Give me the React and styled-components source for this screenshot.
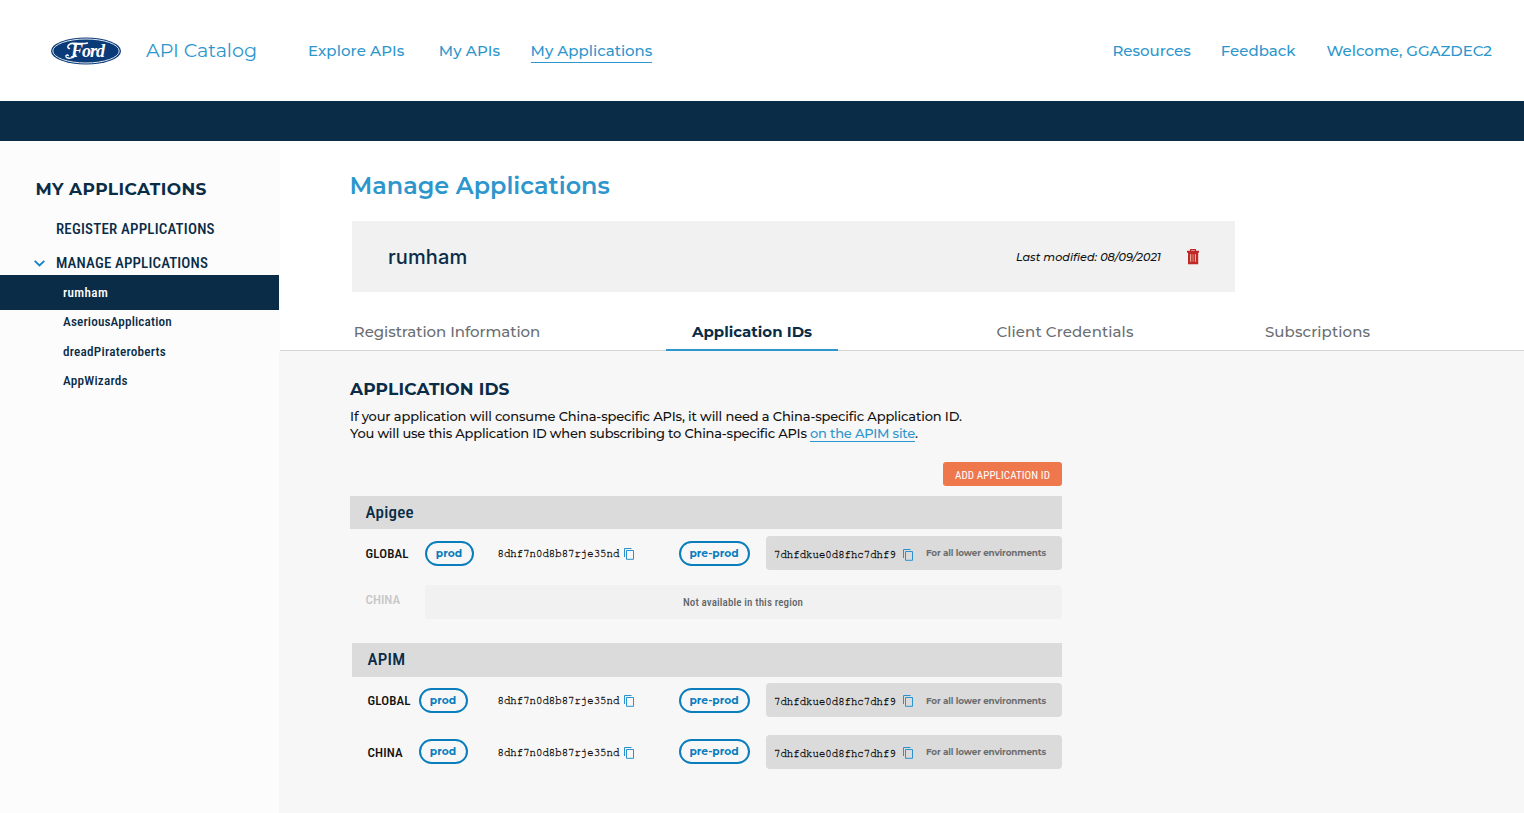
import React from "react";
import styled, { createGlobalStyle, css } from "styled-components";

const NAVY = "#0a2c47";
const SKY = "#2d96cd";
const BLUE = "#0a7dbd";
const WIDE = `Montserrat, Inter, "Liberation Sans", sans-serif`;
const NARROW = `Roboto, "Liberation Sans", sans-serif`;

const GlobalStyle = createGlobalStyle`
  * { box-sizing: border-box; }
  html, body { margin: 0; background: #fff; }
  body { width: 1524px; height: 813px; overflow: hidden; font-family: ${WIDE}; }
  h1, h2, p { margin: 0; }
  a { color: inherit; text-decoration: none; }
`;

const type = css`
  font-size: ${(p) => p.$size}px;
  letter-spacing: ${(p) => p.$track || 0}px;
  white-space: nowrap;
`;
const narrow = css`
  font-family: ${NARROW};
  font-stretch: 75%;
  font-weight: 500;
`;

const Page = styled.div`
  display: flex;
  flex-direction: column;
  height: 813px;
`;
const Header = styled.header`
  display: flex;
  align-items: center;
  height: 101px;
  padding: 0 32px 0 51px;
  color: ${SKY};
`;
const Brand = styled.a`
  ${type}
  width: 134px;
  font-weight: 400;
  margin: 0 0 1px 25px;
`;
const Nav = styled.nav`
  display: flex;
  margin-left: ${(p) => (p.$end ? "auto" : "28px")};
`;
const NavLink = styled.a`
  ${type}
  font-weight: 500;
  line-height: 23px;
  padding-top: 2px;
  margin: 0 0 1px ${(p) => p.$gap || 0}px;
  border-bottom: 1px solid ${(p) => (p.$active ? SKY : "transparent")};
`;
const Band = styled.div`
  height: 40px;
  background: ${NAVY};
`;
const Body = styled.div`
  display: flex;
  flex: 1;
`;
const Sidebar = styled.aside`
  width: 280px;
  padding-top: 36px;
  background: #fcfcfc;
  color: ${NAVY};
`;
const SideTitle = styled.h2`
  ${type}
  font-weight: 700;
  line-height: 24px;
  padding-left: 35.5px;
`;
const SideLink = styled.a`
  ${type}
  ${narrow}
  display: flex;
  align-items: center;
  height: 24px;
  padding-left: ${(p) => (p.$open ? 34 : 56)}px;
  margin-top: ${(p) => p.$top || 0}px;
  svg { margin-right: 11px; }
`;
const SideItem = styled.a`
  ${type}
  ${narrow}
  display: flex;
  align-items: center;
  height: ${(p) => (p.$selected ? 35 : 24)}px;
  margin-bottom: ${(p) => (p.$selected ? -0.5 : 5.5)}px;
  padding-left: 63px;
  width: 279px;
  color: ${(p) => (p.$selected ? "#fff" : NAVY)};
  background: ${(p) => (p.$selected ? NAVY : "transparent")};
`;
const Main = styled.main`
  flex: 1;
  display: flex;
  flex-direction: column;
`;
const PageTitle = styled.h1`
  ${type}
  font-weight: 600;
  color: ${SKY};
  line-height: 30px;
  margin: 30px 0 20px 69.5px;
`;
const AppCard = styled.section`
  display: flex;
  align-items: center;
  width: 883px;
  height: 71px;
  margin-left: 72px;
  padding: 0 36px;
  background: #f1f1f1;
`;
const AppName = styled.span`
  ${type}
  font-family: Inter, sans-serif;
  font-weight: 500;
  color: ${NAVY};
`;
const Modified = styled.span`
  ${type}
  font-style: italic;
  font-weight: 500;
  color: #111;
  margin: 1px 26px 0 auto;
`;
const Tabs = styled.div`
  display: flex;
  height: 59px;
  border-bottom: 1px solid #d4d4d4;
`;
const Tab = styled.a`
  ${type}
  display: flex;
  justify-content: center;
  align-items: flex-start;
  width: ${(p) => p.$width}px;
  margin-left: ${(p) => p.$gap}px;
  height: 59px;
  padding-top: 31px;
  line-height: 18px;
  font-weight: ${(p) => (p.$active ? 700 : 500)};
  color: ${(p) => (p.$active ? NAVY : "#6a6e72")};
  border-bottom: 2px solid ${(p) => (p.$active ? SKY : "transparent")};
`;
const Panel = styled.section`
  flex: 1;
  padding: 27px 0 0 71px;
  background: #f7f7f7;
  margin-left: -1px;
`;
const PanelTitle = styled.h2`
  ${type}
  font-weight: 700;
  line-height: 22px;
  margin-bottom: 7.5px;
  color: ${NAVY};
`;
const Copy = styled.p`
  ${type}
  font-weight: 500;
  line-height: 17.5px;
  color: #111;
`;
const CopyLink = styled.a`
  color: ${SKY};
  display: inline-block;
  line-height: 15px;
  border-bottom: 1px solid ${SKY};
`;
const Ids = styled.div`
  display: flex;
  flex-direction: column;
  width: 712px;
`;
const AddButton = styled.button`
  ${type}
  ${narrow}
  align-self: flex-end;
  width: 119px;
  height: 24px;
  margin: 19.5px 0 10px;
  padding: 2px 0 0;
  border: 0;
  border-radius: 3px;
  font-weight: 400;
  color: #fff;
  background: #ef774c;
`;
const GroupTitle = styled.h2`
  ${type}
  ${narrow}
  height: ${(p) => p.$height}px;
  line-height: 33px;
  margin: ${(p) => p.$top || 0}px 0 ${(p) => p.$after}px ${(p) => p.$inset}px;
  padding-left: 15.5px;
  color: ${NAVY};
  background: #dbdbdb;
`;
const Row = styled.div`
  display: flex;
  align-items: center;
  height: 34px;
  padding-left: ${(p) => p.$inset}px;
  margin-bottom: ${(p) => p.$after || 0}px;
`;
const Region = styled.span`
  ${type}
  ${narrow}
  width: ${(p) => p.$width}px;
  color: ${(p) => (p.$muted ? "#c6c8ca" : "#111")};
  padding-bottom: ${(p) => p.$lift || 0}px;
`;
const Pill = styled.span`
  ${type}
  display: flex;
  justify-content: center;
  align-items: center;
  width: ${(p) => p.$width}px;
  height: 25px;
  padding-top: 1px;
  margin-bottom: ${(p) => p.$lift || 0}px;
  border: 2px solid ${BLUE};
  border-radius: 13px;
  font-weight: 700;
  color: ${BLUE};
`;
const Key = styled.code`
  ${type}
  width: ${(p) => p.$width}px;
  margin-left: ${(p) => p.$gap}px;
  padding-top: ${(p) => p.$drop || 0}px;
  font-family: FreeMono, "Liberation Mono", monospace;
  -webkit-text-stroke: 0.3px #111;
  color: #111;
`;
const KeySlot = styled.span`
  display: flex;
  align-items: center;
  width: ${(p) => p.$width}px;
`;
const LowerBox = styled.div`
  display: flex;
  align-items: center;
  width: 296px;
  height: 34px;
  margin-left: 16px;
  border-radius: 4px;
  background: #dbdbdb;
`;
const Note = styled.span`
  ${type}
  margin-left: 12.5px;
  padding-bottom: ${(p) => p.$lift || 0}px;
  font-weight: 700;
  color: #6b6d70;
`;
const Unavailable = styled.div`
  ${type}
  ${narrow}
  width: 637px;
  height: 34px;
  line-height: 35px;
  border-radius: 4px;
  text-align: center;
  color: #62666a;
  background: #f1f1f1;
`;
const LogoWord = styled.text`
  font: italic 700 18px "Liberation Serif", serif;
  fill: #fff;
`;
const IconSlot = styled.span`
  display: flex;
  margin-top: ${(p) => p.$drop || 0}px;
`;

const FordLogo = () => (
  <svg width="70" height="28" viewBox="0 0 70 28">
    <ellipse cx="35" cy="14" rx="35" ry="13.6" fill="#0b3a78" />
    <ellipse cx="35" cy="14" rx="33.2" ry="12" fill="none" stroke="#dfe7f0" strokeWidth="1" />
    <path d="M18.5 11.5C15.5 11 16.5 6.8 22 6.2C27 5.7 31 7.6 36.5 6" fill="none" stroke="#fff" strokeWidth="1.5" strokeLinecap="round" />
    <path d="M25 18C22 21.5 16.5 22.3 15 19.8C14.3 18.2 16.4 17.4 17.4 18.6" fill="none" stroke="#fff" strokeWidth="1.3" strokeLinecap="round" />
    <LogoWord x="20" y="20" textLength="34">Ford</LogoWord>
  </svg>
);
const Chevron = () => (
  <svg width="11" height="7" viewBox="0 0 11 7" fill="none" stroke="#1583c5" strokeWidth="1.9">
    <path d="M0.7 0.9 5.5 5.4 10.3 0.9" />
  </svg>
);
const Trash = () => (
  <svg width="12" height="16" viewBox="0 0 12 16">
    <path d="M3.6 2V0.7H8.4V2" fill="none" stroke="#bf2a26" strokeWidth="1.2" />
    <path d="M0 1.8H12V3.8H0zM1 3.6H11.2V15.2H1z" fill="#bf2a26" />
    <path d="M3.7 5.2V12.8M8.4 5.2V12.8" stroke="#f0c4b8" strokeWidth="1" />
    <path d="M6 5.2V12.8" stroke="#ec8a6a" strokeWidth="1" />
  </svg>
);
const CopyIcon = () => (
  <svg width="11" height="12" viewBox="0 0 11 12" fill="none" stroke="#2a93cf" strokeWidth="1">
    <path d="M0.5 9V0.5H7.5" />
    <path d="M2.5 2.5H9.5V11.3H2.5z" />
  </svg>
);

const IdRow = ({ region, inset, regionWidth, pillGap, after, noteLift, iconDrop, pillLift }) => (
  <Row $inset={inset} $after={after}>
    <Region $size={13} $track={0.15} $width={regionWidth}>{region}</Region>
    <Pill $size={10.7} $width={49} $lift={pillLift}>prod</Pill>
    <KeySlot $width={pillGap + 181}>
      <Key $size={10.7} $gap={pillGap} $width={126}>8dhf7n0d8b87rje35nd</Key>
      <IconSlot $drop={1}><CopyIcon /></IconSlot>
    </KeySlot>
    <Pill $size={10.7} $width={71} $lift={pillLift}>pre-prod</Pill>
    <LowerBox>
      <Key $size={10.7} $gap={8.5} $width={128.5} $drop={3}>7dhfdkue0d8fhc7dhf9</Key>
      <IconSlot $drop={iconDrop}><CopyIcon /></IconSlot>
      <Note $size={8.8} $track={-0.13} $lift={noteLift}>For all lower environments</Note>
    </LowerBox>
  </Row>
);

export default function App() {
  return (
    <Page>
      <GlobalStyle />
      <Header>
        <FordLogo />
        <Brand $size={19.1} $track={-0.05}>API Catalog</Brand>
        <Nav>
          <NavLink $size={15} $track={0.1}>Explore APIs</NavLink>
          <NavLink $size={15} $track={0.1} $gap={34.5}>My APIs</NavLink>
          <NavLink $size={15} $gap={30.5} $active>My Applications</NavLink>
        </Nav>
        <Nav $end>
          <NavLink $size={15}>Resources</NavLink>
          <NavLink $size={15} $gap={30}>Feedback</NavLink>
          <NavLink $size={15} $gap={31}>Welcome, GGAZDEC2</NavLink>
        </Nav>
      </Header>
      <Band />
      <Body>
        <Sidebar>
          <SideTitle $size={17} $track={0.4}>MY APPLICATIONS</SideTitle>
          <SideLink $size={15} $track={0.2} $top={16}>REGISTER APPLICATIONS</SideLink>
          <SideLink $size={15} $track={0.14} $top={10} $open><Chevron />MANAGE APPLICATIONS</SideLink>
          <SideItem $size={13.2} $track={0.35} $selected>rumham</SideItem>
          <SideItem $size={13.2} $track={0.15}>AseriousApplication</SideItem>
          <SideItem $size={13.2} $track={0.24}>dreadPirateroberts</SideItem>
          <SideItem $size={13.2} $track={0.22}>AppWizards</SideItem>
        </Sidebar>
        <Main>
          <PageTitle $size={23.9}>Manage Applications</PageTitle>
          <AppCard>
            <AppName $size={20} $track={0.1}>rumham</AppName>
            <Modified $size={11.2}>Last modified: 08/09/2021</Modified>
            <Trash />
          </AppCard>
          <Tabs>
            <Tab $size={15} $track={-0.05} $width={188} $gap={73}>Registration Information</Tab>
            <Tab $size={15} $width={172} $gap={125} $active>Application IDs</Tab>
            <Tab $size={15} $track={0.1} $width={172} $gap={141}>Client Credentials</Tab>
            <Tab $size={15} $track={0.1} $width={172} $gap={80.5}>Subscriptions</Tab>
          </Tabs>
          <Panel>
            <PanelTitle $size={17} $track={0.15}>APPLICATION IDS</PanelTitle>
            <Copy $size={13} $track={-0.15}>
              If your application will consume China-specific APIs, it will need a China-specific Application ID.
            </Copy>
            <Copy $size={13} $track={-0.2}>
              You will use this Application ID when subscribing to China-specific APIs <CopyLink>on the APIM site</CopyLink>.
            </Copy>
            <Ids>
              <AddButton $size={11} $track={0.1}>ADD APPLICATION ID</AddButton>
              <GroupTitle $size={17} $track={0.25} $inset={0} $height={33} $after={7}>Apigee</GroupTitle>
              <IdRow region="GLOBAL" inset={15.5} regionWidth={59} pillGap={24} after={15} noteLift={2} iconDrop={3} />
              <Row $inset={15.5}>
                <Region $size={13} $width={59} $lift={5} $muted>CHINA</Region>
                <Unavailable $size={11} $track={0.12}>Not available in this region</Unavailable>
              </Row>
              <GroupTitle $size={17} $track={0.25} $inset={2} $height={34} $after={6} $top={24}>APIM</GroupTitle>
              <IdRow region="GLOBAL" inset={17.5} regionWidth={51} pillGap={30} after={18} iconDrop={1} />
              <IdRow region="CHINA" inset={17.5} regionWidth={51} pillGap={30} pillLift={2} iconDrop={1} noteLift={1} />
            </Ids>
          </Panel>
        </Main>
      </Body>
    </Page>
  );
}
